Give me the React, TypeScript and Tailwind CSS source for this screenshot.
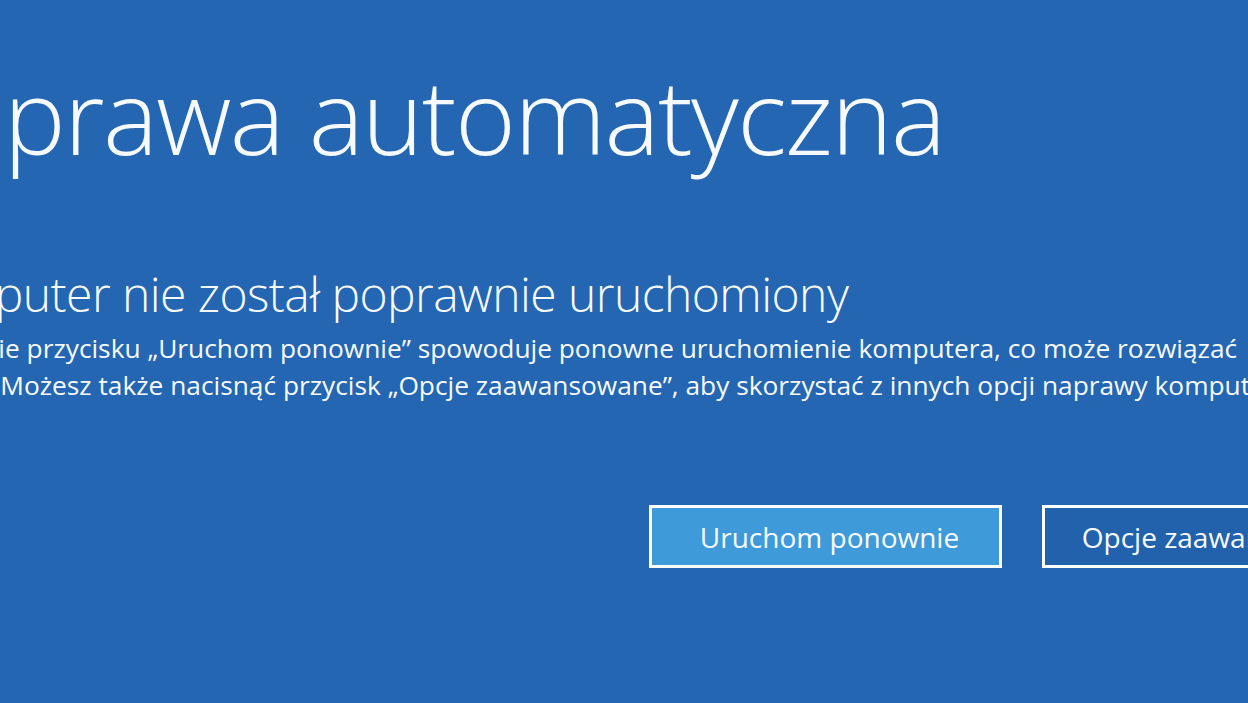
import React from "react";

export default function App() {
  return (
    <div className="w-[1248px] h-[703px] overflow-hidden bg-[#2466b2] text-[#f7fafd] font-['Open_Sans',sans-serif] flex flex-col">
      <h1 className="mt-[63px] ml-[-123px] whitespace-nowrap text-[104px] leading-[104px] font-light tracking-[-1.65px]">
        Naprawa automatyczna
      </h1>
      <h2 className="mt-[103px] ml-[-102px] whitespace-nowrap text-[48px] leading-[48px] font-light tracking-[-0.55px]">
        Komputer nie został poprawnie uruchomiony
      </h2>
      <p className="mt-[12px] ml-[-118px] text-[26.3px] leading-[37px] font-normal whitespace-nowrap">
        Naciśnięcie przycisku „Uruchom ponownie” spowoduje ponowne uruchomienie komputera, co może rozwiązać
        <br />
        problem. Możesz także nacisnąć przycisk „Opcje zaawansowane”, aby skorzystać z innych opcji naprawy komputera.
      </p>
      <div className="mt-[101px] ml-[649px] flex gap-[40px]">
        <button className="w-[353px] h-[63px] shrink-0 border-[3px] border-white bg-[#3f9ad9] flex items-center justify-center pl-[8px] text-[28px] whitespace-nowrap">
          Uruchom ponownie
        </button>
        <button className="w-[353px] h-[63px] shrink-0 border-[3px] border-white bg-[#2262ad] flex items-center justify-center pl-[8px] text-[28px] whitespace-nowrap">
          Opcje zaawansowane
        </button>
      </div>
    </div>
  );
}
